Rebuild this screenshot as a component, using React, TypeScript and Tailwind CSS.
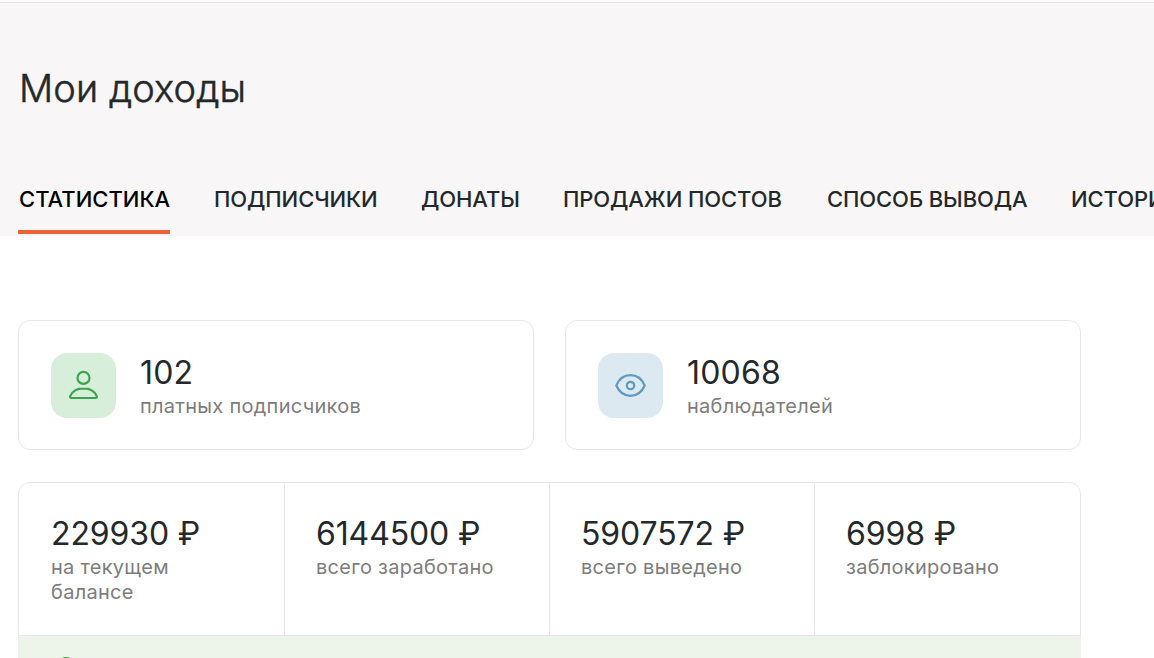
import type { ReactNode } from "react";

const TABS = [
  { label: "Статистика", width: "w-[152px]" },
  { label: "Подписчики", width: "w-[163px]" },
  { label: "Донаты", width: "w-[98px]" },
  { label: "Продажи постов", width: "w-[220px]" },
  { label: "Способ вывода", width: "w-[200px]" },
  { label: "История", width: "w-[120px]" },
];

const BALANCES = [
  { value: "229930 ₽", label: "на текущем балансе" },
  { value: "6144500 ₽", label: "всего заработано" },
  { value: "5907572 ₽", label: "всего выведено" },
  { value: "6998 ₽", label: "заблокировано" },
];

function UserIcon() {
  return (
    <svg width="33" height="33" viewBox="0 0 33 33" fill="none" stroke="#3ba54d" strokeWidth="2.2">
      <circle cx="16.5" cy="8.9" r="6" />
      <path
        d="M16.5 19.3c-6.4 0-11.2 3-13.3 7.9-.4 1 .1 1.8 1.1 1.8h24.4c1 0 1.5-.8 1.1-1.8-2.1-4.9-6.9-7.9-13.3-7.9Z"
        strokeLinejoin="round"
      />
    </svg>
  );
}

function EyeIcon() {
  return (
    <svg width="33" height="33" viewBox="0 0 33 33" fill="none" stroke="#5c9abf" strokeWidth="2.2">
      <path
        d="M2.3 16.5C5.1 10 10.3 6.2 16.5 6.2S27.9 10 30.7 16.5C27.9 23 22.7 26.8 16.5 26.8S5.1 23 2.3 16.5Z"
        strokeLinejoin="round"
      />
      <circle cx="16.5" cy="16.5" r="3.7" />
    </svg>
  );
}

interface FigureProps {
  value: string;
  label: string;
  valueClass: string;
}

function Figure({ value, label, valueClass }: FigureProps) {
  return (
    <div>
      <div className={`text-[32px] leading-[38px] ${valueClass}`}>{value}</div>
      <div className="mt-0.5 text-[20px] leading-[25px] tracking-[0.28px] text-[#7d7d7d]">
        {label}
      </div>
    </div>
  );
}

interface CounterCardProps {
  value: string;
  label: string;
  tint: string;
  children: ReactNode;
}

function CounterCard({ value, label, tint, children }: CounterCardProps) {
  return (
    <div className="flex h-[130px] w-[516px] gap-6 rounded-xl border border-[#e7e7e7] p-8">
      <div className={`flex size-[65px] items-center justify-center rounded-2xl ${tint}`}>
        {children}
      </div>
      <div className="pt-px">
        <Figure value={value} label={label} valueClass="tracking-[0.2px]" />
      </div>
    </div>
  );
}

function App() {
  return (
    <div className="h-[658px] w-full overflow-hidden bg-white font-['Inter',sans-serif] text-[#23292b]">
      {/* Page header with tabs */}
      <header className="mt-0.5 flex h-[234px] flex-col justify-between border-t border-[#e7e7e7] bg-[#f8f6f7] pl-[18px]">
        <h1 className="mt-[61px] pl-px text-[38px] leading-[48px] font-light tracking-[0.1px] [-webkit-text-stroke:0.5px_#23292b]">
          Мои доходы
        </h1>
        <nav className="flex gap-11 overflow-hidden pb-0.5">
          {TABS.map((tab, i) => (
            <button
              key={tab.label}
              className={`h-[52px] shrink-0 border-b-4 pb-[14px] text-left text-[22px] leading-[28px] font-medium whitespace-nowrap uppercase ${tab.width} ${
                i === 0
                  ? "border-[#ec6337] pl-px text-black"
                  : "border-transparent tracking-[-0.1px]"
              }`}
            >
              {tab.label}
            </button>
          ))}
        </nav>
      </header>

      <main className="ml-[18px] w-[1063px] pt-[84px]">
        <section className="flex justify-between">
          <CounterCard value="102" label="платных подписчиков" tint="bg-[#d7eedb]">
            <UserIcon />
          </CounterCard>
          <CounterCard value="10068" label="наблюдателей" tint="bg-[#dde9f1]">
            <EyeIcon />
          </CounterCard>
        </section>

        {/* Money summary */}
        <section className="mt-8">
          <div className="grid h-[154px] grid-cols-[266px_265px_265px_267px] rounded-t-xl border border-[#e7e7e7]">
            {BALANCES.map((item) => (
              <div
                key={item.label}
                className="border-r border-[#e7e7e7] pt-8 pr-12 pl-[31px] first:pl-8 last:border-r-0 last:pr-8"
              >
                <Figure value={item.value} label={item.label} valueClass="tracking-[-0.12px]" />
              </div>
            ))}
          </div>
          <div className="h-[60px] bg-[#edf5ea] pt-[21px] pl-[38px]">
            <div className="size-5 rounded-full border-2 border-[#4caf50]" />
          </div>
        </section>
      </main>
    </div>
  );
}

export default App;
